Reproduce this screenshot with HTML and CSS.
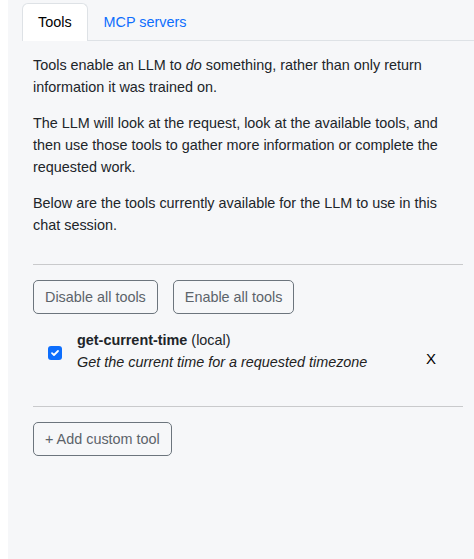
FILE: index.html
```html
<!DOCTYPE html>
<html>
<head>
<meta charset="utf-8">
<link rel="stylesheet" href="styles.css">
</head>
<body>
<div class="panel">
  <nav class="tabs">
    <span class="tab active">Tools</span>
    <span class="tab link">MCP servers</span>
  </nav>
  <div class="content">
    <p>Tools enable an LLM to <em>do</em> something, rather than only return information it was trained on.</p>
    <p>The LLM will look at the request, look at the available tools, and then use those tools to gather more information or complete the requested work.</p>
    <p>Below are the tools currently available for the LLM to use in this chat session.</p>
    <hr class="sep first">
    <div class="actions">
      <button class="btn">Disable all tools</button>
      <button class="btn">Enable all tools</button>
    </div>
    <div class="tool">
      <span class="check">
        <svg width="14" height="14" viewBox="0 0 14 14"><rect width="14" height="14" rx="3" fill="#0d6efd"/><path d="M4 7.2 L6 9 L10 5" fill="none" stroke="#fff" stroke-width="1.8" stroke-linecap="round" stroke-linejoin="round"/></svg>
      </span>
      <div class="tool-text">
        <div><strong>get-current-time</strong> (local)</div>
        <div class="desc">Get the current time for a requested timezone</div>
      </div>
      <span class="remove">X</span>
    </div>
    <hr class="sep">
    <div class="actions">
      <button class="btn">+ Add custom tool</button>
    </div>
  </div>
</div>
</body>
</html>
```
FILE: styles.css
```css
html, body {
  margin: 0;
  padding: 0;
  background: #fff;
}
body {
  padding-left: 8px;
  font-family: "Liberation Sans", Arial, Helvetica, sans-serif;
  font-size: 14.4px;
  line-height: 22px;
  color: #212529;
}
.panel {
  background: #f6f7f9;
  min-height: 559px;
  box-sizing: border-box;
}
.tabs {
  display: flex;
  margin-left: 14px;
  padding-top: 3px;
  border-bottom: 1px solid #dee2e6;
}
.tab {
  display: block;
  height: 36px;
  line-height: 36px;
  padding: 0 15px;
  border: 1px solid transparent;
  border-bottom: none;
  margin-bottom: -1px;
  border-radius: 6px 6px 0 0;
  font-size: 14.4px;
}
.tab.active {
  background: #fff;
  border-color: #dee2e6;
  height: 37px;
  color: #000;
}
.tab.link {
  color: #0d6efd;
}
.content {
  padding: 13px 11px 0 25px;
}
p {
  margin: 0 0 14px 0;
}
.sep {
  border: none;
  border-top: 1px solid #c9cacc;
  margin: 15px 0 15px 0;
}
.sep.first {
  margin-top: 28px;
}
.actions {
  display: flex;
  gap: 15px;
}
.btn {
  font-family: inherit;
  font-size: 14.4px;
  line-height: 22px;
  color: #5c636a;
  background: transparent;
  border: 1px solid #6c757d;
  border-radius: 5px;
  padding: 5px 11px;
}
.tool {
  display: flex;
  align-items: center;
  padding: 15px 27px 18px 15px;
}
.check {
  display: flex;
  width: 14px;
  height: 14px;
  margin-right: 15px;
  margin-top: 4px;
}
.tool-text {
  flex: 1;
}
.desc {
  font-style: italic;
  color: #222;
}
.remove {
  color: #000;
  margin-top: 16px;
  font-size: 15px;
}
```
